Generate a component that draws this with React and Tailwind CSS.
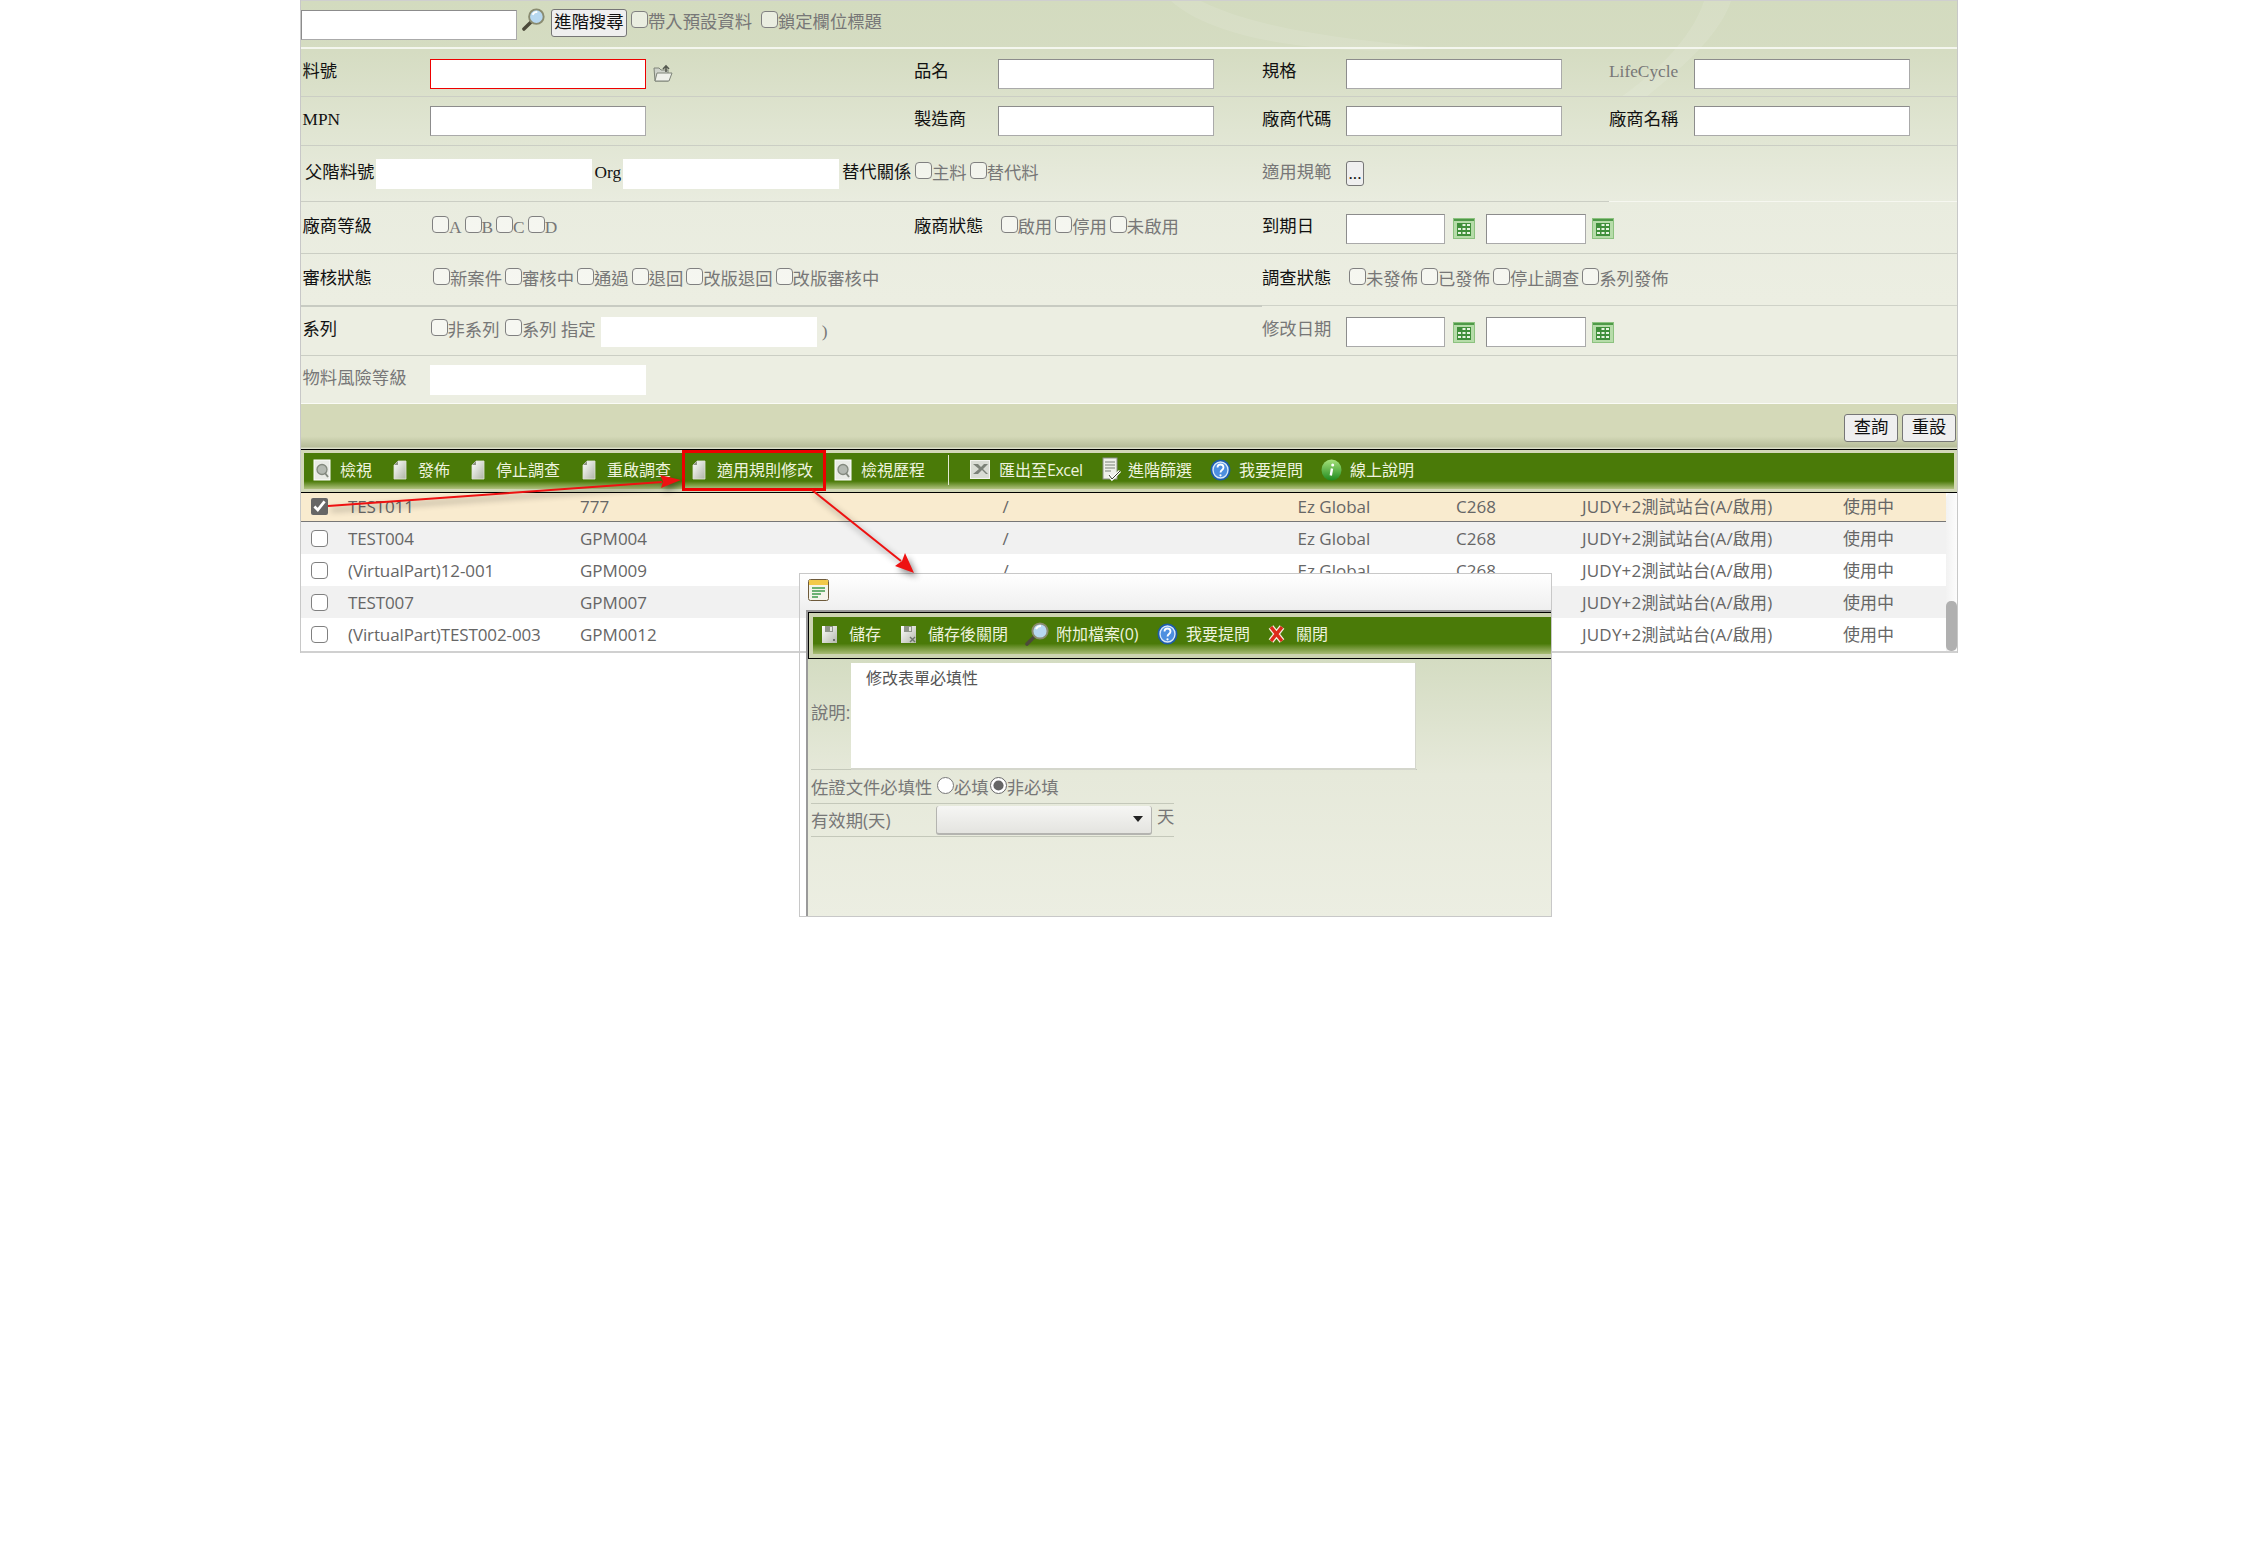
import React from "react";

const SERIF = "[font-family:'Liberation_Serif','Noto_Sans_CJK_TC',serif]";

function Page() {
  return (
    <svg width="14" height="20" viewBox="0 0 14 20" className="shrink-0">
      <defs><linearGradient id="pg" x1="0" x2="1" y1="0" y2="1"><stop offset="0" stopColor="#ffffff" /><stop offset="1" stopColor="#aeb4a4" /></linearGradient></defs>
      <path d="M5 1h8v18H1V5z" fill="url(#pg)" stroke="#dfe3d6" strokeWidth="0.8" />
      <path d="M5 1v4H1z" fill="#8e9484" />
    </svg>
  );
}
function MagDoc() {
  return (
    <svg width="18" height="22" viewBox="0 0 18 22" className="shrink-0">
      <rect x="1" y="1" width="16" height="20" fill="#e9ebe6" stroke="#fff" />
      <circle cx="9" cy="10.5" r="5" fill="#b4b9b2" stroke="#83897f" strokeWidth="1.3" />
      <path d="M12 14l3 4" stroke="#83897f" strokeWidth="1.8" />
    </svg>
  );
}
function Excel() {
  return (
    <svg width="20" height="19" viewBox="0 0 20 19" className="shrink-0">
      <rect x="0.5" y="0.5" width="19" height="18" fill="#d9dcd4" stroke="#f4f4f0" />
      <path d="M3 4l6 5-6 5h5l4-4 4 4h2l-5-5 5-5h-4l-3 3-3-3z" fill="#7c8278" />
    </svg>
  );
}
function Filter() {
  return (
    <svg width="20" height="26" viewBox="0 0 20 26" className="shrink-0">
      <rect x="1" y="1" width="14" height="21" fill="#eef0ea" stroke="#8c9288" />
      <path d="M3 5h10M3 8h10M3 11h10M3 14h6" stroke="#7b8178" strokeWidth="1.2" />
      <path d="M7 18l3 4 8-8" fill="none" stroke="#fff" strokeWidth="3" />
      <path d="M7 18l3 4 8-8" fill="none" stroke="#39412f" strokeWidth="1" />
    </svg>
  );
}
function Help() {
  return (
    <svg width="21" height="22" viewBox="0 0 21 22" className="shrink-0">
      <ellipse cx="10.5" cy="11" rx="10" ry="10.5" fill="#1d5ca8" />
      <ellipse cx="10.5" cy="11" rx="7.5" ry="8" fill="#4d8fe0" stroke="#d8e8fa" strokeWidth="1.4" />
      <path d="M7.5 8.5c0-4 6-4 6 0 0 2.5-3 2.5-3 5" fill="none" stroke="#fff" strokeWidth="1.8" />
      <circle cx="10.5" cy="16.3" r="1.1" fill="#fff" />
    </svg>
  );
}
function Info() {
  return (
    <svg width="21" height="22" viewBox="0 0 21 22" className="shrink-0">
      <defs><linearGradient id="inf" x1="0" x2="0" y1="0" y2="1"><stop offset="0" stopColor="#a6e27a" /><stop offset="1" stopColor="#1f8a1f" /></linearGradient></defs>
      <ellipse cx="10.5" cy="11" rx="10" ry="10.5" fill="url(#inf)" />
      <path d="M11 9.5l-1.2 7" stroke="#fff" strokeWidth="2.4" />
      <circle cx="11.7" cy="6" r="1.5" fill="#fff" />
    </svg>
  );
}
function Save({ x }) {
  return (
    <svg width="17" height="20" viewBox="0 0 17 20" className="shrink-0">
      <defs><linearGradient id="sv" x1="0" x2="1" y1="0" y2="1"><stop offset="0" stopColor="#ffffff" /><stop offset="1" stopColor="#b4b8ac" /></linearGradient></defs>
      <path d="M1 2h15v17H1z" fill="url(#sv)" />
      <rect x="4" y="2" width="8" height="6" fill="#8f948a" />
      <rect x="9" y="3" width="2" height="4" fill="#e4e6df" />
      {x ? <path d="M10 13l5 5M15 13l-5 5" stroke="#6f756c" strokeWidth="1.4" /> : <circle cx="13" cy="16" r="1" fill="#555" />}
    </svg>
  );
}
function Mag({ w = 24, h = 24 }) {
  return (
    <svg width={w} height={h} viewBox="0 0 24 24" className="shrink-0">
      <path d="M10 14L2 22" stroke="#4c4a3a" strokeWidth="3.6" strokeLinecap="round" />
      <circle cx="15" cy="9" r="7.6" fill="#b7d8f0" stroke="#8a8c70" strokeWidth="2" />
      <path d="M11 7c1-2 3-3 5-3" stroke="#fff" strokeWidth="2" fill="none" />
    </svg>
  );
}
function RedX() {
  return (
    <svg width="17" height="20" viewBox="0 0 17 20" className="shrink-0">
      <path d="M3 3l11 14M14 3L3 17" stroke="#f4efe0" strokeWidth="6" />
      <path d="M3 3l11 14M14 3L3 17" stroke="#dd2a1a" strokeWidth="3.4" />
    </svg>
  );
}
function Cal() {
  return (
    <svg width="22" height="21" viewBox="0 0 22 21" className="shrink-0">
      <rect x="0.5" y="0.5" width="21" height="20" fill="#b6dca9" stroke="#8cc27f" />
      <rect x="1" y="1" width="20" height="2" fill="#4f9a48" />
      <rect x="4" y="5" width="14" height="13" fill="#3f8f3a" />
      <path d="M5 10h3v2H5zM9.5 10h3v2h-3zM14 10h3v2h-3zM5 14h3v2H5zM9.5 14h3v2h-3zM14 14h3v2h-3zM9.5 6h3v2h-3zM14 6h3v2h-3z" fill="#e6f4e0" />
    </svg>
  );
}
function Folder() {
  return (
    <svg width="20" height="18" viewBox="0 0 20 18" className="shrink-0">
      <path d="M1 4h5l2 2h7v11H2z" fill="#cfd3cb" stroke="#7e8479" />
      <path d="M4 9h15l-3 8H2z" fill="#eef0ea" stroke="#7e8479" />
      <path d="M10 5l3-3 3 3M13 2v6" stroke="#55594f" strokeWidth="1.6" fill="none" />
    </svg>
  );
}
function WinIcon() {
  return (
    <svg width="21" height="22" viewBox="0 0 21 22" className="shrink-0">
      <rect x="0.5" y="0.5" width="20" height="21" rx="2" fill="#f4f4ea" stroke="#6e5a3a" />
      <rect x="1" y="1" width="19" height="5" fill="#f2c94a" />
      <path d="M4 9h13M4 12h13M4 15h9M4 18h6" stroke="#3f9a4c" strokeWidth="1.5" />
    </svg>
  );
}

function Check({ children, className = "" }) {
  return (
    <label className={`flex items-center text-[#777] whitespace-nowrap ${className}`}>
      <input type="checkbox" className="appearance-none w-[17px] h-[17px] mb-[7px] rounded-[4px] border-[1.5px] border-[#808080] bg-white/50 shrink-0" />
      <span>{children}</span>
    </label>
  );
}
function Field({ className = "", red, none }) {
  const b = none ? "border-0" : red ? "border-[1.5px] border-[#ee0000]" : "border-[1.5px] border-t-[#8c8c8c] border-l-[#8c8c8c] border-r-[#aaa] border-b-[#aaa]";
  return <input type="text" className={`bg-white h-[30px] shrink-0 ${b} ${className}`} />;
}
function Label({ w, gray, className = "", children }) {
  return <div className={`shrink-0 whitespace-nowrap pb-[2px] ${w} ${gray ? "text-[#777]" : "text-[#111]"} ${className}`}>{children}</div>;
}
function Line({ color = "bg-[#cbcec4]", right, h = "h-px", leftW = "w-[961px]" }) {
  return (
    <div className="flex">
      <div className={`${h} ${right ? leftW : "w-full"} ${color}`} />
      {right ? <div className={`h-px flex-1 ${right}`} /> : null}
    </div>
  );
}
function PlainButton({ className = "", children }) {
  return (
    <button type="button" className={`bg-[#efefef] border border-[#767676] rounded-[3px] text-[#111] text-[17.33px] leading-none ${className}`}>
      {children}
    </button>
  );
}
function TItem({ w, icon, gap, children }) {
  return (
    <div className={`flex items-center shrink-0 ${w} ${gap} whitespace-nowrap`}>
      {icon}
      <span>{children}</span>
    </div>
  );
}

const rows = [
  ["TEST011", "777", true],
  ["TEST004", "GPM004"],
  ["(VirtualPart)12-001", "GPM009"],
  ["TEST007", "GPM007"],
  ["(VirtualPart)TEST002-003", "GPM0012"],
];

function Row({ r, i }) {
  const bg = i === 0 ? "bg-[#f9ebcf] h-[29px] pb-[2px] border-b border-[#777]" : i % 2 === 1 ? "bg-[#f1f1f1] h-[32px]" : "bg-white h-[32px]";
  return (
    <div className={`grid grid-cols-[47px_232px_422.5px_295px_158.5px_126px_261px_1fr] items-center ${bg}`}>
      <div className="pl-[10px] flex items-center">
        {r[2] ? (
          <input type="checkbox" defaultChecked className="w-[17px] h-[17px] accent-[#666]" />
        ) : (
          <input type="checkbox" className="appearance-none w-[17px] h-[17px] rounded-[4px] border-[1.5px] border-[#808080] bg-white" />
        )}
      </div>
      <div className="tracking-[-0.12px]">{r[0]}</div>
      <div>{r[1]}</div>
      <div>/</div>
      <div>Ez Global</div>
      <div>C268</div>
      <div className="tracking-[0.2px]">JUDY+2測試站台(A/啟用)</div>
      <div>使用中</div>
    </div>
  );
}

function Dialog() {
  return (
    <div className={`absolute left-[799px] top-[573px] w-[753px] h-[344px] border border-[#c8c8c8] flex flex-col [font-family:'Open_Sans','Noto_Sans_CJK_TC',sans-serif]`}>
      <div className="h-[36px] shrink-0 bg-gradient-to-b from-white to-[#efefef] pl-[8px] pt-[5px]">
        <WinIcon />
      </div>
      <div className="flex-1 flex flex-col ml-[6px] border-l-2 border-t-2 border-[#9a9a9a] min-h-0">
        <div className="shrink-0 h-[47px] bg-[#cdd4b2] border-y border-l border-black pl-[4px] pt-[4px]">
          <div className="h-[37px] flex items-center pl-[8px] pb-[4px] text-[16px] text-[#eef3de] bg-[linear-gradient(#4a7a08_0%,#4a7a08_72%,#a9bc76_100%)]">
            <TItem w="w-[79px]" gap="gap-[11px]" icon={<Save />}>儲存</TItem>
            <TItem w="w-[125px]" gap="gap-[11px]" icon={<Save x />}>儲存後關閉</TItem>
            <TItem w="w-[132px]" gap="gap-[7px]" icon={<Mag />}>附加檔案(0)</TItem>
            <TItem w="w-[111px]" gap="gap-[8px]" icon={<Help />}>我要提問</TItem>
            <TItem w="w-auto" gap="gap-[11px]" icon={<RedX />}>關閉</TItem>
          </div>
        </div>
        <div className="flex-1 bg-[linear-gradient(#d4dcc2_0%,#e6e9da_45%,#eceee2_100%)] text-[17.33px] leading-none text-[#777] pl-[3px]">
          <div className="flex items-center h-[111px] pt-[4px] border-b border-[#c4c8ba] w-[606px]">
            <span className="w-[40px] shrink-0 pb-[6px]">說明:</span>
            <div className="bg-white h-[107px] w-[565px] pl-[15px] pt-[7px] text-[16px] text-[#555] border-b-2 border-r border-[#d4d6cc]">修改表單必填性</div>
          </div>
          <div className="flex items-center h-[34px] pt-[2px] w-[363px] border-b border-[#c4c8ba]">
            <span className="w-[126px] shrink-0">佐證文件必填性</span>
            <label className="flex items-center">
              <input type="radio" name="req" className="w-[17px] h-[17px] m-0 mb-1 accent-[#666]" />
              <span>必填</span>
            </label>
            <label className="flex items-center ml-[1px]">
              <input type="radio" name="req" defaultChecked className="w-[17px] h-[17px] m-0 mb-1 accent-[#666]" />
              <span>非必填</span>
            </label>
          </div>
          <div className="flex items-center h-[33px] w-[363px] border-b border-[#c4c8ba]">
            <span className="w-[125px] shrink-0 pt-[2px] whitespace-nowrap">有效期(天)</span>
            <div className="w-[216px] h-[29px] rounded-[3px] bg-gradient-to-b from-[#f6f6f4] to-[#e4e4e0] border-b-2 border-r border-l border-[#b4b4b0] flex items-center justify-end pr-[8px] shrink-0">
              <svg width="10" height="6" viewBox="0 0 10 6"><path d="M0 0h10L5 6z" fill="#222" /></svg>
            </div>
            <span className="ml-[5px] pb-[6px]">天</span>
          </div>
        </div>
      </div>
    </div>
  );
}

function Arrows() {
  return (
    <svg className="absolute left-0 top-0 pointer-events-none drop-shadow-[3px_4px_3px_rgba(0,0,0,0.45)]" width="2258" height="1553" viewBox="0 0 2258 1553">
      <path d="M328 506L662 482" stroke="#ee1111" strokeWidth="2" fill="none" />
      <path d="M681 480L660 475L663 481.5L661 488Z" fill="#ee1111" />
      <path d="M812 490L901 561" stroke="#ee1111" strokeWidth="2" fill="none" />
      <path d="M914 573L895 566L902 561L905 553Z" fill="#ee1111" />
    </svg>
  );
}

export default function App() {
  return (
    <div className={`relative w-full min-h-[1553px] bg-white ${SERIF} text-[17.33px] leading-none`}>
      <div className="ml-[300px] w-[1658px] border-x border-[#c8c8c8]">
        {/* form */}
        <div className="relative bg-[linear-gradient(#d3dbbf_0px,#d5dcc2_50px,#e0e5d2_130px,#e9ecdf_200px,#eceee2_300px)] border-t border-[#cfcfcf] overflow-hidden">
          <svg className="absolute left-0 top-0 pointer-events-none" width="1656" height="110" viewBox="0 0 1656 110">
            <path d="M870 0C920 45 1050 55 1140 47C1060 40 960 30 900 0Z" fill="#ffffff" fillOpacity="0.1" />
            <path d="M1403 0C1390 40 1350 75 1320 96L1345 96C1390 60 1420 30 1430 0Z" fill="#ffffff" fillOpacity="0.1" />
          </svg>
          <div className="relative">
            <div className="flex items-center h-[46px] pb-[2px]">
              <Field className="w-[216px] mt-[4px]" />
              <span className="ml-[5px] mb-[8px]"><Mag w={23} h={23} /></span>
              <PlainButton className="ml-[6px] w-[76px] h-[28px] px-0 whitespace-nowrap">進階搜尋</PlainButton>
              <Check className="ml-[4px]">帶入預設資料</Check>
              <Check className="ml-[9px]">鎖定欄位標題</Check>
            </div>
            <Line color="bg-[#f4f6ee]" h="h-[2px]" />

            <div className="flex items-center h-[47px]">
              <div className="flex items-center w-[613px] shrink-0">
                <Label w="w-[129px]" className="pl-[1.5px]">料號</Label>
                <Field red className="w-[216px] mt-[3px]" />
                <span className="ml-[7px]"><Folder /></span>
              </div>
              <div className="flex items-center w-[348px] shrink-0">
                <Label w="w-[84px]">品名</Label>
                <Field className="w-[216px] mt-[3px]" />
              </div>
              <div className="flex items-center w-[347px] shrink-0">
                <Label w="w-[84px]">規格</Label>
                <Field className="w-[216px] mt-[3px]" />
              </div>
              <div className="flex items-center">
                <Label w="w-[85px]" gray>LifeCycle</Label>
                <Field className="w-[216px] mt-[3px]" />
              </div>
            </div>
            <Line />

            <div className="flex items-center h-[48px]">
              <div className="flex items-center w-[613px] shrink-0">
                <Label w="w-[129px]" className="pl-[1.5px]">MPN</Label>
                <Field className="w-[216px]" />
              </div>
              <div className="flex items-center w-[348px] shrink-0">
                <Label w="w-[84px]">製造商</Label>
                <Field className="w-[216px]" />
              </div>
              <div className="flex items-center w-[347px] shrink-0">
                <Label w="w-[84px]">廠商代碼</Label>
                <Field className="w-[216px]" />
              </div>
              <div className="flex items-center">
                <Label w="w-[85px]">廠商名稱</Label>
                <Field className="w-[216px]" />
              </div>
            </div>
            <Line />

            <div className="flex items-center h-[55px]">
              <div className="flex items-center w-[961px] shrink-0">
                <Label w="w-[75px]" className="pl-[4px]">父階料號</Label>
                <Field none className="w-[216px]" />
                <Label w="w-[31px]" className="pl-[2.5px]">Org</Label>
                <Field none className="w-[216px]" />
                <Label w="w-[76px]" className="pl-[3px]">替代關係</Label>
                <Check>主料</Check>
                <Check className="ml-[3px]">替代料</Check>
              </div>
              <div className="flex items-center">
                <Label w="w-[84px]" gray>適用規範</Label>
                <PlainButton className="w-[18px] h-[25px] text-[13px] px-0">...</PlainButton>
              </div>
            </div>
            <Line right="bg-[#f6f7f0]" leftW="w-[1308px]" />

            <div className="flex items-center h-[51px]">
              <div className="flex items-center w-[613px] shrink-0">
                <Label w="w-[131px]" className="pl-[1.5px]">廠商等級</Label>
                <Check>A</Check>
                <Check className="ml-[3px]">B</Check>
                <Check className="ml-[3px]">C</Check>
                <Check className="ml-[3px]">D</Check>
              </div>
              <div className="flex items-center w-[348px] shrink-0">
                <Label w="w-[86.5px]">廠商狀態</Label>
                <Check>啟用</Check>
                <Check className="ml-[3px]">停用</Check>
                <Check className="ml-[3px]">未啟用</Check>
              </div>
              <div className="flex items-center">
                <Label w="w-[84px]">到期日</Label>
                <Field className="w-[99px] mt-[2px]" />
                <span className="ml-[8px] mt-[2px]"><Cal /></span>
                <Field className="w-[100px] mt-[2px] ml-[11px]" />
                <span className="ml-[6px] mt-[2px]"><Cal /></span>
              </div>
            </div>
            <Line />

            <div className="flex items-center h-[51px]">
              <div className="flex items-center w-[961px] shrink-0">
                <Label w="w-[132px]" className="pl-[1.5px]">審核狀態</Label>
                <Check>新案件</Check>
                <Check className="ml-[3px]">審核中</Check>
                <Check className="ml-[3px]">通過</Check>
                <Check className="ml-[3px]">退回</Check>
                <Check className="ml-[3px]">改版退回</Check>
                <Check className="ml-[3px]">改版審核中</Check>
              </div>
              <div className="flex items-center">
                <Label w="w-[87px]">調查狀態</Label>
                <Check>未發佈</Check>
                <Check className="ml-[3px]">已發佈</Check>
                <Check className="ml-[3px]">停止調查</Check>
                <Check className="ml-[3px]">系列發佈</Check>
              </div>
            </div>
            <div className="flex items-start h-[2px]">
              <div className="h-[2px] w-[961px] bg-[#c8cbc2]" />
              <div className="h-px flex-1 bg-[#cfd2c8]" />
            </div>

            <div className="flex items-center h-[48px]">
              <div className="flex items-center w-[961px] shrink-0">
                <Label w="w-[129.5px]" className="pl-[1.5px]">系列</Label>
                <Check>非系列</Check>
                <Check className="ml-[5.5px]">系列 指定</Check>
                <Field none className="w-[216px] ml-[5px] mt-[2px]" />
                <span className="ml-[5px] text-[#777] mt-[2px]">)</span>
              </div>
              <div className="flex items-center">
                <Label w="w-[84px]" gray>修改日期</Label>
                <Field className="w-[99px] mt-[2px]" />
                <span className="ml-[8px] mt-[2px]"><Cal /></span>
                <Field className="w-[100px] mt-[2px] ml-[11px]" />
                <span className="ml-[6px] mt-[2px]"><Cal /></span>
              </div>
            </div>
            <Line />

            <div className="flex items-center h-[47px]">
              <Label w="w-[129px]" gray className="pl-[1.5px]">物料風險等級</Label>
              <Field none className="w-[216px]" />
            </div>
            <Line color="bg-[#fafbf6]" />
          </div>
        </div>

        {/* query bar */}
        <div className="h-[45px] bg-[linear-gradient(#d4d9b8_0%,#d4d9b8_72%,#b7bd9a_95%,#e8ead8_100%)] flex items-start justify-end gap-[4px] pt-[10px] pr-[1px]">
          <PlainButton className="w-[54px] h-[28px]">查詢</PlainButton>
          <PlainButton className="w-[54px] h-[28px]">重設</PlainButton>
        </div>

        {/* toolbar */}
        <div className="border-y border-black bg-[#d3d8b8] h-[44px] px-[3px] pt-[3px] pb-[3px] [font-family:'Open_Sans','Noto_Sans_CJK_TC',sans-serif]">
          <div className="h-[36px] flex items-center pl-[9px] pb-[3px] text-[16px] text-[#eef3de] bg-[linear-gradient(#4a7a08_0%,#4a7a08_78%,#b1c280_100%)]">
            <TItem w="w-[80px]" gap="gap-[9px]" icon={<MagDoc />}>檢視</TItem>
            <TItem w="w-[78px]" gap="gap-[11px]" icon={<Page />}>發佈</TItem>
            <TItem w="w-[111px]" gap="gap-[11px]" icon={<Page />}>停止調查</TItem>
            <TItem w="w-[110px]" gap="gap-[11px]" icon={<Page />}>重啟調查</TItem>
            <TItem w="w-[142px]" gap="gap-[11px]" icon={<Page />}>適用規則修改</TItem>
            <TItem w="w-[114px]" gap="gap-[9px]" icon={<MagDoc />}>檢視歷程</TItem>
            <div className="w-px h-[30px] bg-[#e4e9d4] mr-[21px]" />
            <TItem w="w-[132px]" gap="gap-[9px]" icon={<Excel />}>匯出至<span className="tracking-[-0.5px]">Excel</span></TItem>
            <TItem w="w-[108px]" gap="gap-[6px]" icon={<Filter />}>進階篩選</TItem>
            <TItem w="w-[111px]" gap="gap-[8px]" icon={<Help />}>我要提問</TItem>
            <TItem w="w-auto" gap="gap-[8px]" icon={<Info />}>線上說明</TItem>
          </div>
        </div>

        {/* table */}
        <div className="flex border-b-2 border-[#d0d0d0] h-[160px] [font-family:'Open_Sans','Noto_Sans_CJK_TC',sans-serif] text-[17px] text-[#666]">
          <div className="flex-1 min-w-0">
            {rows.map((r, i) => <Row key={r[0]} r={r} i={i} />)}
          </div>
          <div className="w-[11px] shrink-0 rounded-t-[5px] bg-gradient-to-r from-[#f2f2f2] to-[#fcfcfc] flex flex-col justify-end">
            <div className="h-[50px] rounded-[5px] bg-[#b0b0b0]" />
          </div>
        </div>
      </div>

      <Dialog />
      <div className="absolute left-[682px] top-[450px] w-[144px] h-[41px] border-[3px] border-[#ee0000]" />
      <Arrows />
    </div>
  );
}
